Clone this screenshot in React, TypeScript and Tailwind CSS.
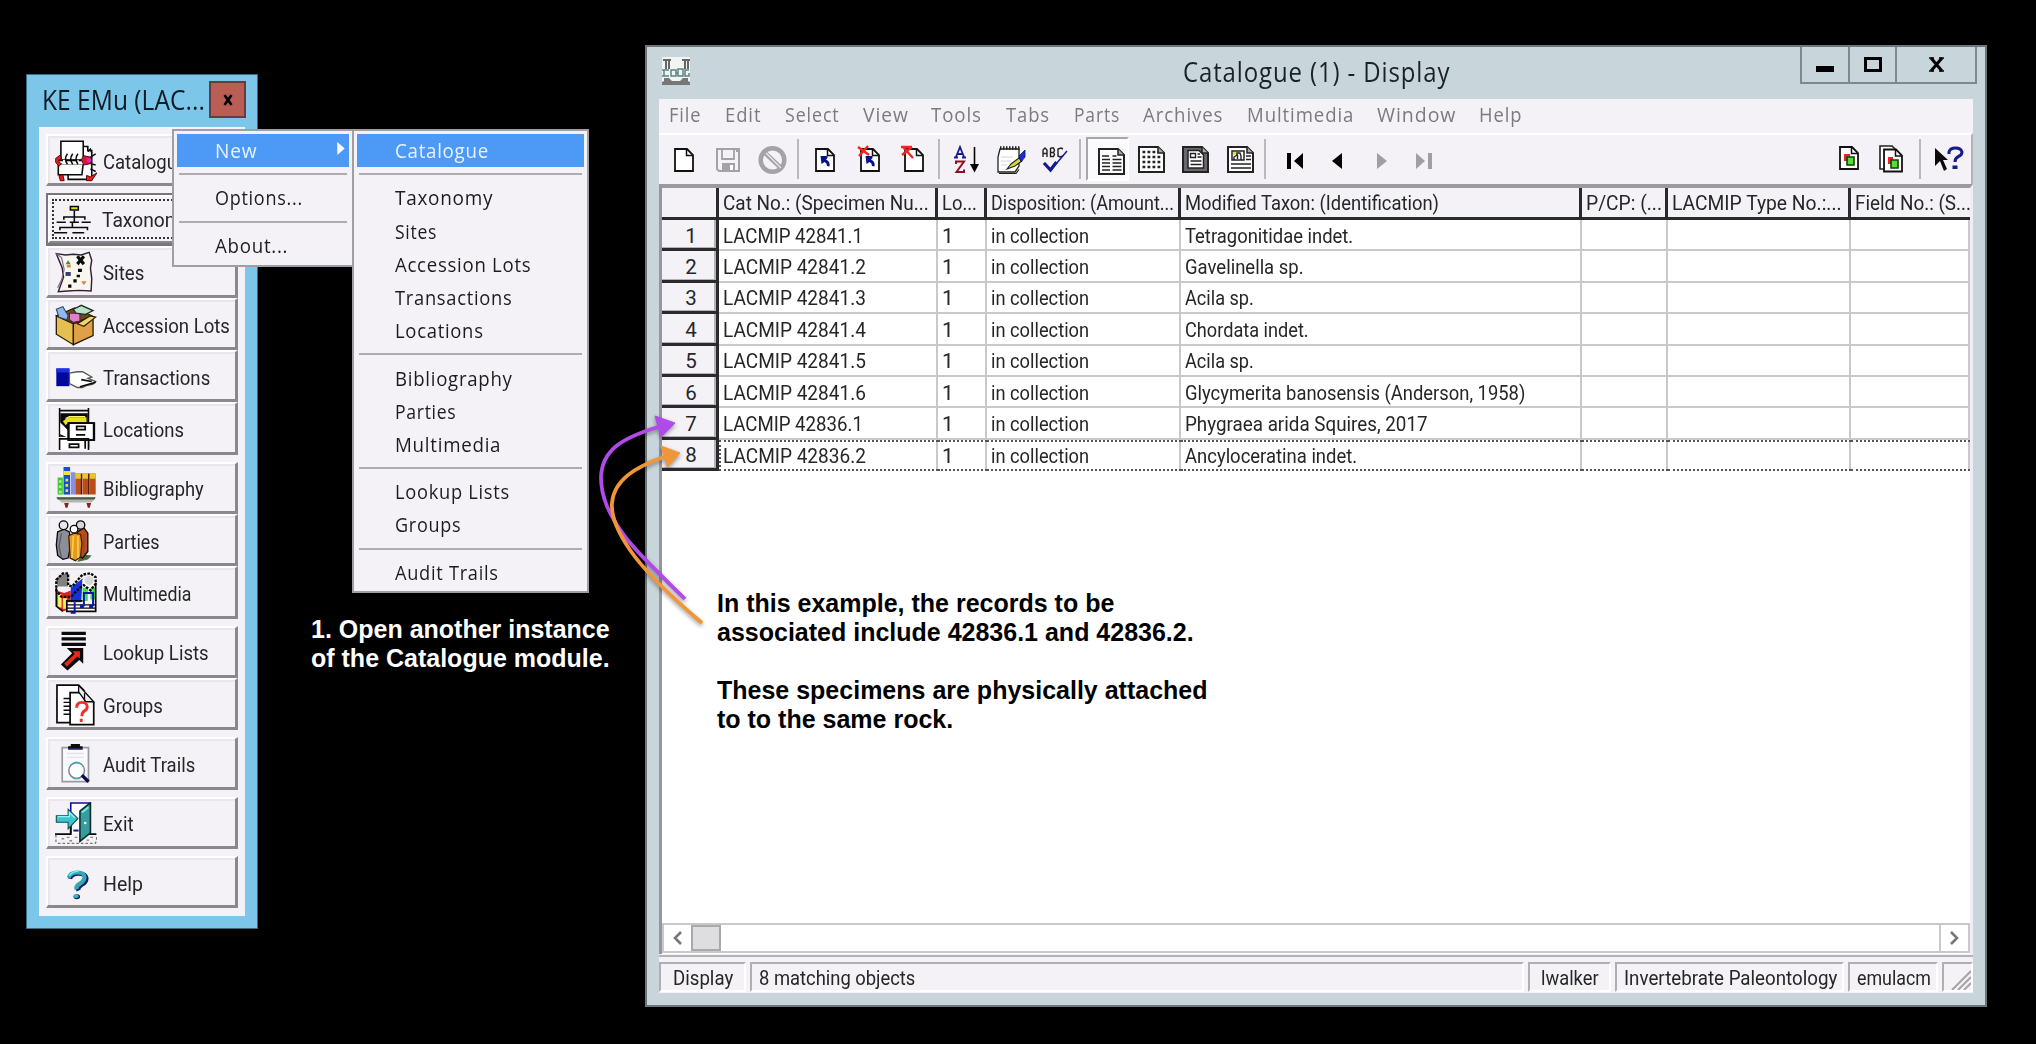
import { useLayoutEffect, useRef, useState } from "react";
import type { ReactNode } from "react";
import clsx from "clsx";

/** A single line of text condensed or stretched to an exact width. */
function Fit({ w, children, className }: { w: number; children: string; className?: string }) {
  const ref = useRef<HTMLSpanElement>(null);
  const [scale, setScale] = useState(1);
  useLayoutEffect(() => {
    if (ref.current) setScale(w / ref.current.offsetWidth);
  }, [w, children]);
  return (
    <span className={clsx("block whitespace-pre", className)} style={{ width: w }}>
      <span ref={ref} className="inline-block origin-left" style={{ transform: `scaleX(${scale})` }}>
        {children}
      </span>
    </span>
  );
}

/* ---------- module icons (32 x 32) ---------- */

const K = "#0a0a0a";

const icons: Record<string, ReactNode> = {
  catalogue: (
    <>
      <path d="M20 5h5v3h3v22H10v-4" fill="#fff" stroke={K} strokeWidth="1.2" />
      <path d="M4.500 1h17v14h-17z" fill="#fff" stroke={K} strokeWidth="1.2" />
      <path d="M2.500 18h19l-1 8.500h-18z" fill="#fff" stroke={K} strokeWidth="1.2" />
      <path d="M3 15h19v3.500H3z" fill="#fff" />
      <path d="M2 15.500h4M18 15.500h8M8 15.500h9" stroke={K} strokeWidth="1.2" />
      <path d="M9.500 10.500q-3 4 0 8M13.500 10.500q-3 4 0 8M17.500 10.500q-3 4 0 8M25 9l2-2 1 3M27 13l4-2.500M27 18l4 1M27 22l4 2" fill="none" stroke={K} strokeWidth="1.1" />
      <path d="M4 11.500L.5 14v3L3 20l2-2-2-1v-2l2-1z" fill="#e02020" stroke="#5a0000" strokeWidth=".7" />
      <path d="M22 12l-2 3 2 4 5-1v-5z" fill="#d4183c" stroke="#5a0000" strokeWidth=".7" />
      <circle cx="26" cy="15.500" r="1.700" fill="#e020d0" />
      <path d="M3 27l3-.5 1 4.500H4zM24 27l3 1 5-3-4 6h-4z" fill="#e02020" stroke="#5a0000" strokeWidth=".7" />
    </>
  ),
  taxonomy: (
    <g fill="none" stroke={K} strokeWidth="1.2">
      <path d="M12.500 6.500h6v2.600h-6z" fill="#e8e000" />
      <path d="M15.500 9.500v9M7.500 16.500v-2h16v2" />
      <path d="M2 18.500h7M12 18.500h7M21 18.500h7M14 19v3.500M4.500 24.500v-2h21v2" />
      <path d="M0 26.500h10M14 26.500h9" />
    </g>
  ),
  sites: (
    <>
      <path d="M1 2l7 1 6-.5 6 .5 6-2 2 6-1 6 1 8-.5 9.500-9-.5-9 .5-7 .5 4-11-1-7z" fill="#f9f6ee" stroke="#33203c" strokeWidth="1.100" />
      <path d="M1 2l4 3 2 9-2 8-3 6" fill="none" stroke="#7e6a86" strokeWidth=".9" />
      <path d="M17 4l5 6M22 4l-5 6" stroke={K} strokeWidth="2.400" />
      <path d="M17.500 13.500h3v2.500h-3zM16.500 18h2.500v2h-2.500zM14 21.500h2.500V24H14zM10 25.500h2.500V28H10z" fill={K} />
      <path d="M10 7l2 3h-4z" fill="#4a8a4a" />
      <path d="M9 10.500h3v2H9zM20 23h4l-2 3z" fill="#c89040" />
      <path d="M8 16h4v3H8z" fill="#3a3a7a" />
    </>
  ),
  accession: (
    <>
      <path d="M1 9l13 6v16L1 23z" fill="#e4c050" stroke="#2a1c00" strokeWidth="1" />
      <path d="M14 15l15-5v14l-15 7z" fill="#dfa048" stroke="#2a1c00" strokeWidth="1" />
      <path d="M1 9L15 3l13 6-14 6z" fill="#6a4a20" stroke="#2a1c00" strokeWidth=".9" />
      <path d="M1 4l5-2 4 7-1 3-6-2z" fill="#90b8f0" stroke="#2c405c" strokeWidth=".8" />
      <path d="M11 7h8v6l-5 1-3-2z" fill="#e080c8" stroke="#50204a" strokeWidth=".8" />
      <path d="M14 4l6-3 9 4-6 3-7-1z" fill="#bfe0c8" stroke="#1f3328" strokeWidth="1" />
      <path d="M17 15l10-6 4 1-9 7z" fill="#f0d868" stroke="#2a1c00" strokeWidth=".9" />
    </>
  ),
  transactions: (
    <>
      <path d="M1 9.500h10V23H1z" fill="#00089c" />
      <path d="M1 9.500h10v3H1z" fill="#1c30e8" />
      <path d="M11 13l6-1h4l7 4-3 1 6 2.500-2 2-5 1-3 1.500h-4l-6-3z" fill="#fff" stroke="#555" strokeWidth="1" />
      <path d="M20 18l8 1.500M19 23.500l12-3.500" fill="none" stroke={K} strokeWidth="1.200" />
    </>
  ),
  locations: (
    <>
      <path d="M3.500 0v2h22V0M3.500 2v20M25.500 0v31" fill="none" stroke={K} strokeWidth="1.200" />
      <path d="M4 4h21v18H4z" fill={K} />
      <path d="M6 10l4-3h14v4H11l-3 2z" fill="#e8e020" />
      <path d="M8 8l3-1.500h12" stroke="#f8f480" fill="none" />
      <path d="M4 11l7 7v5l-7-3z" fill="#fff" />
      <path d="M10.500 11.500h19v13h-19z" fill="#fff" stroke={K} strokeWidth="1.400" />
      <path d="M16.500 14h6.500v2.500h-6.500zM16 20.500h7" fill="none" stroke={K} strokeWidth="1.300" />
      <path d="M3.500 32v-8.500h22V32" fill="#fff" stroke={K} strokeWidth="1.200" />
      <path d="M10 11.500h20v13H10z" fill="none" stroke={K} strokeWidth="1.200" />
      <path d="M11 27.500h7v2.500h-7zM23 25v6" fill="none" stroke={K} strokeWidth="1.300" />
    </>
  ),
  bibliography: (
    <>
      <path d="M2 8h4v13H2z" fill="#44c832" />
      <path d="M3 10h2v2H3zm0 4h2v2H3zm0 4h2v2H3z" fill="#a8f090" />
      <path d="M6.500 0h5v21h-5z" fill="#1450d0" />
      <path d="M6.500 3h5v3h-5zM8 9h2v2H8zm0 4h2v2H8zm0 4h2v2H8z" fill="#f0e040" />
      <path d="M12 4h3.500v17H12z" fill="#8c90d8" />
      <path d="M15.500 5H20v16h-4.500zM21 5h4.500v16H21zM26.300 5h4.700v16h-4.700z" fill="#bc4c18" />
      <path d="M15.500 5H20v4h-4.500zM21 5h4.500v4H21zM26.300 5h4.700v4h-4.700z" fill="#e8c828" />
      <path d="M20.200 5v16M25.700 5v16" stroke="#4c1400" />
      <path d="M1 23h30l-3 4H5z" fill="#b4b6b0" />
      <path d="M1 23h30l-1 1.800H2z" fill="#4a5c40" />
      <path d="M7 27.500h3.500L9.500 31h-1.500zM24 27.500h3.500L26.500 31H25z" fill="#902020" />
    </>
  ),
  parties: (
    <>
      <path d="M20 26l8 1-3 3-8 2z" fill="#4c6c40" />
      <path d="M2 9l5-2 4 2 1 10-2 10-4 1-4-3-1-8z" fill="#8e8e98" stroke={K} strokeWidth="1" />
      <path d="M17 9l5-3 3 4v14l-4 5-3-2z" fill="#c84818" stroke={K} strokeWidth="1" />
      <path d="M10.500 12l4-2 5 1 1 7-1 10-4 3-4-2z" fill="#e89820" stroke="#402000" strokeWidth="1" />
      <path d="M14 12l-1 17M17.500 12v17" stroke="#f6d050" strokeWidth="1.200" />
      <path d="M5 10l-2 10 2 9M22 10v16" fill="none" stroke="#5a5a64" />
      <circle cx="6.500" cy="4" r="3.300" fill="#e8e8e8" stroke={K} strokeWidth="1" />
      <circle cx="19.500" cy="3.800" r="3.200" fill="#d8d8d8" stroke={K} strokeWidth="1" />
      <circle cx="14.500" cy="7" r="2.900" fill="#fff" stroke={K} strokeWidth="1" />
    </>
  ),
  multimedia: (
    <>
      <path d="M1 5l5-4 4 1v9H2z" fill="#808080" />
      <path d="M1 14l6 2 5-2v14l-6 2-5-5z" fill="#e02020" />
      <path d="M2 17h3v10H2zM6 20h3v8H6z" fill="#f0f060" />
      <path d="M12 12l9-7v20h-9z" fill="#1430e0" />
      <path d="M21 6l6-4 4 3v25H9v-7h11z" fill="#fff" />
      <path d="M21 12h4v10h-4zM27 12h4v9h-4z" fill="#44e040" />
      <circle cx="26" cy="6.500" r="3.500" fill="#d8d8d8" />
      <path d="M1 6l5-5h4v9l3 1 8-9 6-1 4 3v5l-4 5-5-4-3 2-7 7H5L1 14z" fill="none" stroke={K} strokeWidth="1.800" strokeDasharray="2 1" />
      <path d="M1 12v14l5 4M31 8v22H9v-8h12" fill="none" stroke={K} strokeWidth="1.300" />
      <path d="M9 25h22M9 27.500h22" stroke={K} strokeWidth=".9" />
      <path d="M22 26V16h7v10M15 23v8h-3" fill="none" stroke="#0818b0" strokeWidth="1.500" />
      <path d="M19 25h3v2.500h-3zM26 25h3v2.500h-3z" fill="#0818b0" />
    </>
  ),
  lookup: (
    <>
      <path d="M5 1.800h18.500M5 6h18.500M5 10.200h18.500" stroke={K} strokeWidth="2.500" />
      <path d="M9 13h12.500v12l-3-3-9 8-5-4.500 8.500-8.500z" fill={K} />
      <path d="M13.500 15.500h5.500V21l-2-1.500-8 7.500-2-2 8-7.500z" fill="#e82818" />
    </>
  ),
  groups: (
    <>
      <path d="M1.500 .8H18l4 4V29.500H1.500z" fill="#fff" stroke={K} strokeWidth="1.300" />
      <path d="M6.500 11h5M6.500 14h5M6.500 17h5M6.500 20h5M6.500 23h5" stroke={K} strokeWidth="1.100" />
      <path d="M11.500 6.500H22l7.500 7.500v17h-18z" fill="#fff" stroke={K} strokeWidth="1.300" />
      <path d="M18 1v5l5.500 7.500h6L18 1M22.500 7v6.500" fill="#f0f0f0" stroke={K} strokeWidth="1" />
      <path d="M16.500 18q0-4 4-4t4 3.500q0 2-2 3t-2 4M20 26.500v2.500" fill="none" stroke="#f03028" strokeWidth="2.200" />
    </>
  ),
  audit: (
    <>
      <path d="M5.500 3.500h20v26h-20z" fill="#fafafc" stroke="#9a98a0" strokeWidth="1.300" />
      <path d="M9 8h13M9 11h13" stroke="#e4e2ea" />
      <path d="M10 5V2.500h2V.8h7v1.700h2V5z" fill={K} />
      <path d="M10 4.500h11" stroke="#2c2c80" />
      <circle cx="16.500" cy="21" r="6" fill="#fcfcff" stroke="#7c8498" strokeWidth="1.100" />
      <path d="M12 17q4-4 8-1M14 27h5" stroke="#40b0b8" fill="none" strokeWidth="1.100" />
      <path d="M20.500 24.500l5 5" stroke="#0c0c50" strokeWidth="2.600" />
    </>
  ),
  exit: (
    <>
      <path d="M12 1h15v23H12z" fill="#fff" />
      <path d="M12 24V.8h15" fill="none" stroke="#10108c" strokeWidth="1.200" />
      <path d="M0 24.500h12V18M26 24.500h5.500" fill="none" stroke={K} strokeWidth="1.400" />
      <path d="M.7 25v5l2 1.500h28l1-2V25" fill="none" stroke="#777" strokeWidth="1" strokeDasharray="2 1.500" />
      <path d="M5 28h2M9 27h2M11 29.500h2M15 27h2M24 29h2M27 27h2" stroke="#888" />
      <path d="M19 7l8-6.500v23L19 30z" fill="#389c9c" stroke="#062c2c" strokeWidth="1.200" />
      <path d="M20.500 8l5-4" stroke="#7ce8e8" strokeWidth="1.500" />
      <circle cx="23" cy="16" r="1" fill="#e0ffff" />
      <path d="M1 10.500h9v-5l7.500 7-7.500 8v-5H1z" fill="#40c4cc" stroke="#0c4c54" strokeWidth=".8" />
      <path d="M2 11.200h9V8l4 4" fill="none" stroke="#90f4f4" />
      <path d="M14 21h4v1.500h-4z" fill="#10108c" />
    </>
  ),
  help: (
    <>
      <path d="M10.500 12q1-4 6.500-4t6 3.500q0 3-3.500 5T17 21" fill="none" stroke="#10186c" strokeWidth="3.300" transform="translate(.9 .8)" />
      <path d="M10.500 12q1-4 6.500-4t5.500 3.500q0 3-3.500 5T16.500 21" fill="none" stroke="#34a8b0" strokeWidth="3.200" />
      <path d="M11 10.500q2-3.500 7-3.500" fill="none" stroke="#70f0f0" strokeWidth="1.200" />
      <ellipse cx="16.600" cy="26.500" rx="2.500" ry="1.900" fill="#10186c" />
      <ellipse cx="16" cy="26" rx="2" ry="1.500" fill="#34b8c0" />
    </>
  ),
};

const modules: { icon: string; label: string; w: number; gap?: boolean; focus?: boolean }[] = [
  { icon: "catalogue", label: "Catalogue", w: 84, gap: true },
  { icon: "taxonomy", label: "Taxonomy", w: 89, focus: true },
  { icon: "sites", label: "Sites", w: 41 },
  { icon: "accession", label: "Accession Lots", w: 127 },
  { icon: "transactions", label: "Transactions", w: 107 },
  { icon: "locations", label: "Locations", w: 81, gap: true },
  { icon: "bibliography", label: "Bibliography", w: 101 },
  { icon: "parties", label: "Parties", w: 57 },
  { icon: "multimedia", label: "Multimedia", w: 88, gap: true },
  { icon: "lookup", label: "Lookup Lists", w: 106 },
  { icon: "groups", label: "Groups", w: 60, gap: true },
  { icon: "audit", label: "Audit Trails", w: 92, gap: true },
  { icon: "exit", label: "Exit", w: 31, gap: true },
  { icon: "help", label: "Help", w: 40 },
];

function ModuleButton({ icon, label, w, gap, focus }: (typeof modules)[number]) {
  return (
    <div
      className={clsx(
        "h-[52.3px] w-[192px] shrink-0",
        gap && "mb-[7px]",
        focus && "border-2 border-b-[3px] border-[#78767a]",
      )}
    >
      <div
        className={clsx(
          "flex h-full items-center border-2 border-t-white border-l-white",
          focus ? "border-r-[#8a888c] border-b-[#8a888c] p-[2px]" : "border-r-[3px] border-b-[3px] border-r-[#8a888c] border-b-[#8a888c]",
        )}
      >
        <div
          className={clsx(
            "flex h-full w-full items-center",
            focus ? "border-2 border-dotted border-[#333] pl-0" : "border-t-2 border-l-2 border-[#e9e7eb] pl-[5px]",
          )}
        >
          <svg className="h-[42px] w-[42px] shrink-0" viewBox="0 0 32 32">
            {icons[icon]}
          </svg>
          <Fit w={w} className="ml-[6px] pt-[2px] text-[20.5px] leading-[24px]">
            {label}
          </Fit>
        </div>
      </div>
    </div>
  );
}

function LauncherWindow() {
  return (
    <div className="absolute top-[74px] left-[26px] flex h-[855px] w-[232px] flex-col border border-[#3c6a80] bg-[#7cc6ea] px-[12px] pb-[12px]">
      <div className="flex h-[52px] items-start justify-between">
        <Fit w={163} className="ml-[3px] pt-[7px] font-['Open_Sans'] text-[27px] leading-[36px] text-[#101c24]">
          KE EMu (LAC...
        </Fit>
        <div className="mt-[6px] -mr-[1px] flex h-[37px] w-[37px] items-center justify-center border-2 border-[#6b3a40] bg-[#b95d55]">
          <svg className="h-[12px] w-[12px]" viewBox="0 0 12 12">
            <path d="M2.500 1l7 10M9.500 1l-7 10" stroke="#000" strokeWidth="2.600" />
          </svg>
        </div>
      </div>
      <div className="flex flex-1 flex-col bg-[#f4f2f6] pt-[7px] pl-[7px]">
        {modules.map((m) => (
          <ModuleButton key={m.label} {...m} />
        ))}
      </div>
    </div>
  );
}

/* ---------- popup menus ---------- */

type Item = [string, number] | null;

function Menu({ items, className, arrow }: { items: Item[]; className: string; arrow?: boolean }) {
  return (
    <div className={clsx("absolute border-2 border-[#a09ea3] bg-[#f4f2f6] py-[3px] font-['Open_Sans'] text-[20.5px] leading-[33.200px] text-[#1c1c1e]", className)}>
      {items.map((it, i) =>
        it ? (
          <div
            key={i}
            className={clsx("mx-[3px] flex h-[33.200px] items-center pl-[38px]", i === 0 && "bg-[#4c9af6] text-[#e8f2ff]")}
          >
            <Fit w={it[1]} className="tracking-[0.8px]">
              {it[0]}
            </Fit>
            {arrow && i === 0 && (
              <svg className="mr-[4px] mb-[4px] ml-auto h-[13px] w-[8px]" viewBox="0 0 8 14">
                <path d="M0 0l8 7-8 7z" fill="#fff" />
              </svg>
            )}
          </div>
        ) : (
          <div key={i} className="mx-[5px] flex h-[14.200px] items-center">
            <div className="h-[2px] w-full bg-[#aeacb0]" />
          </div>
        ),
      )}
    </div>
  );
}

const newMenu: Item[] = [["New", 42], null, ["Options...", 88], null, ["About...", 73]];
const moduleMenu: Item[] = [
  ["Catalogue", 94],
  null,
  ["Taxonomy", 98],
  ["Sites", 42],
  ["Accession Lots", 136],
  ["Transactions", 117],
  ["Locations", 89],
  null,
  ["Bibliography", 118],
  ["Parties", 61],
  ["Multimedia", 106],
  null,
  ["Lookup Lists", 115],
  ["Groups", 66],
  null,
  ["Audit Trails", 104],
];

/* ---------- toolbar ---------- */

function Tool({ w, className, children }: { w: number; className?: string; children: ReactNode }) {
  return (
    <svg className={clsx("h-[30px] shrink-0", className)} width={w} viewBox={`0 0 ${w} 30`} fill="none">
      {children}
    </svg>
  );
}

function Sep({ className }: { className: string }) {
  return <div className={clsx("-mt-[6px] h-[40px] w-[2px] shrink-0 bg-[#bab8bc]", className)} />;
}

function Page({ x = 0, y = 0 }: { x?: number; y?: number }) {
  return (
    <g transform={`translate(${x} ${y})`} stroke="#111" strokeWidth="1.800">
      <path d="M2 4h12l6 6v16H2z" fill="#fff" />
      <path d="M13.500 4v6.500H20" strokeWidth="1.500" />
    </g>
  );
}

function Report({ children, fill = "#fff" }: { children: ReactNode; fill?: string }) {
  return (
    <>
      <path d="M2 3h19l6 6v19H2z" fill={fill} stroke="#222" strokeWidth="2" />
      <path d="M21 3v6h6" stroke="#222" strokeWidth="1.500" fill="#aaa" />
      {children}
    </>
  );
}

const navyArrow = "M6.500 11h7v2l-1.500 1.500q4.500 2 3.500 7l-2.500-.5q0-3-2.500-4l-3 2z";

function Toolbar() {
  return (
    <div className="flex h-[51px] items-start border-t-2 border-r-2 border-t-white border-r-[#b4b2b6] pt-[10px]">
      <Tool w={22} className="ml-[14px]">
        <Page />
      </Tool>
      <Tool w={27} className="ml-[20px]">
        <path d="M2 4h22v22H4l-2-2z" stroke="#a4a2a6" strokeWidth="2" />
        <path d="M7 4v10h12V4M21 6h2" stroke="#a4a2a6" strokeWidth="1.800" />
        <path d="M7 18h13v8H7z" fill="#a4a2a6" />
        <path d="M15 20h3v5h-3z" fill="#fff" />
      </Tool>
      <Tool w={31} className="ml-[15px]">
        <circle cx="15.500" cy="15" r="11.800" stroke="#a4a2a6" strokeWidth="4.500" />
        <path d="M7 7l17 16" stroke="#a4a2a6" strokeWidth="4.500" />
        <path d="M9 8l15 15" stroke="#eceaee" strokeWidth="1.200" />
      </Tool>
      <Sep className="ml-[9px]" />
      <Tool w={24} className="ml-[15px]">
        <Page />
        <path d={navyArrow} fill="#0a1088" />
      </Tool>
      <Tool w={26} className="ml-[18px]">
        <Page x={3} />
        <path d={navyArrow} fill="#0a1088" transform="translate(3 0)" />
        <path d="M2 2l11 8M12 1L3 11" stroke="#ee2820" strokeWidth="2.500" />
      </Tool>
      <Tool w={26} className="ml-[18px]">
        <Page x={3} />
        <path d="M1 2h11M3 2l10 11M12 2L2 10" stroke="#ee2820" strokeWidth="2.400" />
      </Tool>
      <Sep className="ml-[12px]" />
      <Tool w={29} className="ml-[13px]">
        <path d="M3 12L7 2l4 10M4.500 9h5M1 12.500h4M9 12.500h4" stroke="#141a90" strokeWidth="1.800" />
        <path d="M3 19v-2.500h8L3.500 27H11v-2.500" stroke="#8c1420" strokeWidth="2" />
        <path d="M21.500 2v20" stroke="#000" strokeWidth="1.600" />
        <path d="M17 19h9l-4.500 8.500z" fill="#000" />
      </Tool>
      <Tool w={31} className="ml-[14px]">
        <path d="M4 4h19v17l-4 6H2V12z" fill="#fff" stroke="#222" strokeWidth="1.300" />
        <path d="M3 28.500h17l3-4" stroke="#222" strokeWidth="1.200" />
        <path d="M4 3h20" stroke="#222" strokeWidth="3.500" strokeDasharray="1.500 1.500" />
        <path d="M5 12h12M5 16h10M5 20h6" stroke="#d4d2d8" />
        <path d="M11 24l4-5 8-6 3 3-7 5z" fill="#d8d838" stroke="#222" strokeWidth="1.100" />
        <path d="M23 11l6-6v7l-4 5z" fill="#1830d8" stroke="#0a1060" strokeWidth=".8" />
      </Tool>
      <Tool w={28} className="ml-[14px]">
        <path d="M2 12V5l2-2 2 2v7M2 8.500h4M9.500 3v8.500h3l1-2-1-2h-3 3l1-2-1-2.500h-3M22 4l-2-1-3 1v7l2 1 3-1" stroke="#222" strokeWidth="1.400" />
        <path d="M3 18l7 7L26 6" stroke="#141a90" strokeWidth="1.500" />
        <path d="M3 18l6.500 7 6-8" stroke="#141a90" strokeWidth="3.200" />
      </Tool>
      <Sep className="ml-[10px]" />
      <div className="-mt-[8px] ml-[5px] h-[44px] w-[43px] shrink-0 border-2 border-t-[#a8a6aa] border-r-white border-b-white border-l-[#a8a6aa] bg-[#fbfafc] pt-[7px] pl-[9px]">
        <Tool w={29}>
          <Report>
            <path d="M5 10h7M5 13.500h8M5 17h8M5 20.500h8M5 24h8M15.500 10h4M15.500 13.500h9M15.500 17h9M15.500 20.500h9M15.500 24h9" stroke="#222" strokeWidth="1.500" />
          </Report>
        </Tool>
      </div>
      <Tool w={29} className="-mt-[1px] ml-[8px]">
        <Report>
          <path d="M5.500 8h16M5.500 13h19M5.500 18h19M5.500 23h19" stroke="#222" strokeWidth="2.600" strokeDasharray="2.800 2.200" />
        </Report>
      </Tool>
      <Tool w={29} className="-mt-[1px] ml-[15px]">
        <Report fill="#6a686c">
          <path d="M7 6.500h11l4.500 4.500v13H7z" fill="#fff" stroke="#222" strokeWidth="1.500" />
          <path d="M9.500 9.500h5v4h-5zM16.500 10h2.500M16.500 13h4M9.500 17h11M9.500 20.500h11" stroke="#222" strokeWidth="1.400" />
        </Report>
      </Tool>
      <Tool w={29} className="-mt-[1px] ml-[16px]">
        <Report>
          <path d="M6 7h12v9H6zM20 12h5M20 15.500h5M5 20h20M5 24h20" stroke="#222" strokeWidth="1.500" />
          <path d="M7 8h4v3H7z" fill="#e8e040" />
          <path d="M8 16v-3l3-2v-2h3l1 3v4M11.500 11v4" stroke="#222" strokeWidth="1.400" />
        </Report>
      </Tool>
      <Sep className="ml-[9px]" />
      <Tool w={18} className="ml-[20px]">
        <path d="M1 8h4v16H1zM17 8v16L8 16z" fill="#000" />
      </Tool>
      <Tool w={10} className="ml-[28px]">
        <path d="M10 8v16L0 16z" fill="#000" />
      </Tool>
      <Tool w={12} className="ml-[34px]">
        <path d="M1 8v16l10-8z" fill="#a09ea2" />
      </Tool>
      <Tool w={17} className="ml-[28px]">
        <path d="M0 8v16l9-8zM12 8h4v16h-4z" fill="#a09ea2" />
      </Tool>
      <div className="flex-1" />
      <Tool w={22}>
        <g transform="translate(0 -2)">
          <Page />
          <path d="M6 11h6v7H6z" fill="#ee2820" />
          <path d="M9 14h7v8H9z" fill="#50e030" stroke="#163c10" strokeWidth="1.600" />
        </g>
      </Tool>
      <Tool w={24} className="ml-[19px]">
        <path d="M1 1h12l3 3v20H1z" fill="#fff" stroke="#222" strokeWidth="1.600" />
        <Page x={3} y={0.5} />
        <path d="M9 12h5v7H9z" fill="#ee2820" />
        <path d="M12 15h7v8h-7z" fill="#50e030" stroke="#163c10" strokeWidth="1.600" />
      </Tool>
      <Sep className="ml-[16px]" />
      <Tool w={32} className="ml-[12px]">
        <path d="M2 3l13 12h-5l4 9-3 2-4-10-5 5z" fill="#0a0a0a" />
        <path d="M16 9V7q1-4 6.500-4T29 7q0 3-3.500 4.500T22 17" stroke="#141a90" strokeWidth="3" />
        <path d="M19.500 20.500h5V24h-5z" fill="#141a90" />
      </Tool>
      <div className="w-[6px]" />
    </div>
  );
}

/* ---------- catalogue window ---------- */

const menuBar: [string, number, string][] = [
  ["File", 32, "ml-[10px]"],
  ["Edit", 36, "ml-[24px]"],
  ["Select", 55, "ml-[24px]"],
  ["View", 46, "ml-[23px]"],
  ["Tools", 51, "ml-[22px]"],
  ["Tabs", 44, "ml-[24px]"],
  ["Parts", 46, "ml-[24px]"],
  ["Archives", 80, "ml-[23px]"],
  ["Multimedia", 107, "ml-[24px]"],
  ["Window", 79, "ml-[23px]"],
  ["Help", 43, "ml-[23px]"],
];

const headers: [string, number][] = [
  ["Cat No.: (Specimen Nu...", 206],
  ["Lo...", 35],
  ["Disposition: (Amount...", 183],
  ["Modified Taxon: (Identification)", 254],
  ["P/CP: (...", 76],
  ["LACMIP Type No.:...", 170],
  ["Field No.: (S...", 116],
];

const rows: [string, number, string, number][] = [
  ["LACMIP 42841.1", 140, "Tetragonitidae indet.", 168],
  ["LACMIP 42841.2", 143, "Gavelinella sp.", 119],
  ["LACMIP 42841.3", 143, "Acila sp.", 69],
  ["LACMIP 42841.4", 143, "Chordata indet.", 124],
  ["LACMIP 42841.5", 143, "Acila sp.", 69],
  ["LACMIP 42841.6", 143, "Glycymerita banosensis (Anderson, 1958)", 340],
  ["LACMIP 42836.1", 140, "Phygraea arida Squires, 2017", 243],
  ["LACMIP 42836.2", 143, "Ancyloceratina indet.", 172],
];

const gridCols = "grid grid-cols-[57px_219px_49px_194px_401px_86px_183px_119px]";

function Cell({ children, first, last }: { children?: ReactNode; first?: boolean; last?: boolean }) {
  return (
    <div
      className={clsx(
        "flex items-center overflow-hidden",
        last ? "border-y-2 border-dotted border-[#555] pt-[1px]" : "border-b-2 border-[#cac8cc] pt-[2px]",
        last && first ? "border-l-2 pl-[2px]" : "pl-[4px]",
        !last && "border-r-2",
        last && "relative after:absolute after:inset-y-0 after:right-0 after:w-[2px] after:bg-[#cac8cc]",
      )}
    >
      {children}
    </div>
  );
}

function Grid() {
  return (
    <div className="flex h-[770px] flex-col border-t-4 border-r-[3px] border-l-[3px] border-t-[#9c9a9e] border-r-[#f0eef2] border-l-[#98969a] bg-white">
      <div className={clsx(gridCols, "h-[32px] shrink-0")}>
        <div className="border-r-[3px] border-b-[3px] border-[#2a2a2c] bg-[#f4f2f6]" />
        {headers.map(([t, w], i) => (
          <div
            key={t}
            className={clsx(
              "flex items-center overflow-hidden border-b-[3px] border-[#2a2a2c] bg-[#f4f2f6] pt-[1px] pl-[4px]",
              i < 6 && "border-r-[3px]",
            )}
          >
            <Fit w={w}>{t}</Fit>
          </div>
        ))}
      </div>
      {rows.map(([no, w, taxon, tw], i) => (
        <div key={no} className={clsx(gridCols, "h-[31.400px] shrink-0")}>
          <div className="flex items-center justify-center border-r-[3px] border-b-[3px] border-[#2a2a2c] bg-[#f4f2f6] pt-[3px] pl-[4px] shadow-[inset_-2px_-1px_0_#b4b2b6]">
            {i + 1}
          </div>
          <Cell first last={i === 7}>
            <Fit w={w}>{no}</Fit>
          </Cell>
          <Cell last={i === 7}>1</Cell>
          <Cell last={i === 7}>
            <Fit w={98}>in collection</Fit>
          </Cell>
          <Cell last={i === 7}>
            <Fit w={tw}>{taxon}</Fit>
          </Cell>
          <Cell last={i === 7} />
          <Cell last={i === 7} />
          <Cell last={i === 7} />
        </div>
      ))}
      <div className="flex-1" />
      <div className="mb-[1px] flex h-[30px] shrink-0 border-2 border-[#cac8cc]">
        <div className="flex w-[27px] items-center justify-center">
          <svg className="h-[14px] w-[9px]" viewBox="0 0 9 14" fill="none">
            <path d="M8 1L2 7l6 6" stroke="#777" strokeWidth="2.600" />
          </svg>
        </div>
        <div className="w-[30px] border-2 border-[#aaa8ac] bg-[#dedde0]" />
        <div className="flex-1" />
        <div className="flex w-[29px] items-center justify-center border-l-2 border-[#cac8cc]">
          <svg className="h-[14px] w-[9px]" viewBox="0 0 9 14" fill="none">
            <path d="M1 1l6 6-6 6" stroke="#777" strokeWidth="2.600" />
          </svg>
        </div>
      </div>
    </div>
  );
}

function Panel({ className, children }: { className: string; children?: ReactNode }) {
  return (
    <div className={clsx("flex h-[30px] items-center border-2 border-t-[#b0aeb2] border-r-white border-b-white border-l-[#b0aeb2] pt-[2px]", className)}>
      {children}
    </div>
  );
}

function StatusBar() {
  return (
    <div className="flex h-[38px] items-start gap-[4px] border-t-2 border-[#b4b2b6] pt-[5px]">
      <Panel className="w-[87px] pl-[12px]">
        <Fit w={60}>Display</Fit>
      </Panel>
      <Panel className="flex-1 pl-[7px]">
        <Fit w={156}>8 matching objects</Fit>
      </Panel>
      <Panel className="w-[83px] pl-[11px]">
        <Fit w={58}>lwalker</Fit>
      </Panel>
      <Panel className="w-[229px] pl-[7px]">
        <Fit w={213}>Invertebrate Paleontology</Fit>
      </Panel>
      <Panel className="w-[90px] pl-[7px]">
        <Fit w={74}>emulacm</Fit>
      </Panel>
      <Panel className="w-[31px] items-end justify-end">
        <svg className="h-[20px] w-[20px]" viewBox="0 0 20 20">
          <path d="M1 20L20 1M7 20L20 7M13 20l7-7" stroke="#a6a4a8" strokeWidth="2" />
        </svg>
      </Panel>
    </div>
  );
}

function CatalogueWindow() {
  return (
    <div className="absolute top-[45px] left-[645px] flex h-[962px] w-[1342px] flex-col border-2 border-[#6c777c] bg-[#c8d5db] px-[12px]">
      <div className="flex h-[52px] items-start">
        <svg className="mt-[10px] ml-[3px] h-[28px] w-[28px]" viewBox="0 0 28 28">
          <path d="M0 0h28v28H0z" fill="#f2f4f4" />
          <path d="M1 2h8v2H8v8H6V4H5v8H3V4H1zM20 2h8v2h-1v8h-2V4h-1v8h-2V4h-2z" fill="#666" />
          <path d="M0 13h7M0 19h7M2 13v6M9 13h5v6H9zM16 12h5v7h-5zM27 13h-4v6h4v-3M14 16h2" stroke="#5a8480" strokeWidth="1.500" fill="none" />
          <path d="M2 21h5l3 3h8l3-3h5v3l2 1v3H0v-3l2-1z" fill="#777" />
        </svg>
        <Fit w={267} className="ml-[493px] pt-[7px] font-['Open_Sans'] text-[27px] leading-[36px] tracking-[1px] text-[#1a2226]">
          Catalogue (1) - Display
        </Fit>
        <div className="-mr-[4px] ml-auto flex h-[37px] w-[177px] divide-x-2 divide-[#7e898e] border-2 border-t-0 border-[#7e898e]">
          <div className="flex w-[48px] items-center justify-center">
            <div className="mt-[8px] h-[6px] w-[18px] bg-black" />
          </div>
          <div className="flex w-[47px] items-center justify-center">
            <div className="h-[15px] w-[18px] border-[3.500px] border-black" />
          </div>
          <div className="flex flex-1 items-center justify-center">
            <svg className="h-[15px] w-[17px]" viewBox="0 0 17 15">
              <path d="M3 1l11 13M14 1L3 14" stroke="#000" strokeWidth="3" />
              <path d="M1 1h5M11 1h5M1 14h5M11 14h5" stroke="#000" strokeWidth="1.500" />
            </svg>
          </div>
        </div>
      </div>
      <div className="flex h-[894px] flex-col bg-[#f4f2f6]">
        <div className="flex h-[34px] items-center pb-[4px] font-['Open_Sans'] text-[20.5px] leading-[30px] tracking-[1px] text-[#7c7a7e]">
          {menuBar.map(([t, w, ml]) => (
            <Fit key={t} w={w} className={ml}>
              {t}
            </Fit>
          ))}
        </div>
        <Toolbar />
        <Grid />
        <div className="flex-1" />
        <StatusBar />
      </div>
    </div>
  );
}

/* ---------- annotations ---------- */

function Note({ lines, className }: { lines: [string, number][]; className: string }) {
  return (
    <div className={clsx("absolute font-['Liberation_Sans'] text-[25px] leading-[29px] font-bold", className)}>
      {lines.map(([t, w], i) =>
        t ? (
          <Fit key={i} w={w}>
            {t}
          </Fit>
        ) : (
          <div key={i} className="h-[29px]" />
        ),
      )}
    </div>
  );
}

function Arrows() {
  return (
    <svg className="absolute top-[400px] left-[590px] h-[240px] w-[130px] drop-shadow-[0_2px_2px_rgba(0,0,0,0.4)]" viewBox="590 400 130 240" fill="none">
      <path d="M685 599C668 582 640 556 626 538C608 514 601 496 601 477C602 450 622 438 658 427" stroke="#b04ae8" strokeWidth="3.800" />
      <path d="M655 416l20 7-14 14z" fill="#b04ae8" stroke="#b04ae8" />
      <path d="M702 623C675 600 645 572 630 550C617 531 611 515 612 503C614 480 635 467 664 457" stroke="#f09638" strokeWidth="3.800" />
      <path d="M661 446l19 7-12.500 14z" fill="#f09638" stroke="#f09638" />
    </svg>
  );
}

export default function App() {
  return (
    <div className="relative h-[1044px] w-[2036px] overflow-hidden bg-black font-[Roboto] text-[20.5px] leading-[24px] text-[#262628]">
      <LauncherWindow />
      <CatalogueWindow />
      <Menu items={newMenu} arrow className="top-[129px] left-[172px] h-[138px] w-[182px]" />
      <Menu items={moduleMenu} className="top-[129px] left-[352px] h-[464px] w-[237px]" />
      <Note
        className="top-[615px] left-[311px] text-white"
        lines={[
          ["1. Open another instance", 299],
          ["of the Catalogue module.", 299],
        ]}
      />
      <Note
        className="top-[589px] left-[717px] text-black"
        lines={[
          ["In this example, the records to be", 397],
          ["associated include 42836.1 and 42836.2.", 477],
          ["", 0],
          ["These specimens are physically attached", 491],
          ["to to the same rock.", 236],
        ]}
      />
      <Arrows />
    </div>
  );
}
